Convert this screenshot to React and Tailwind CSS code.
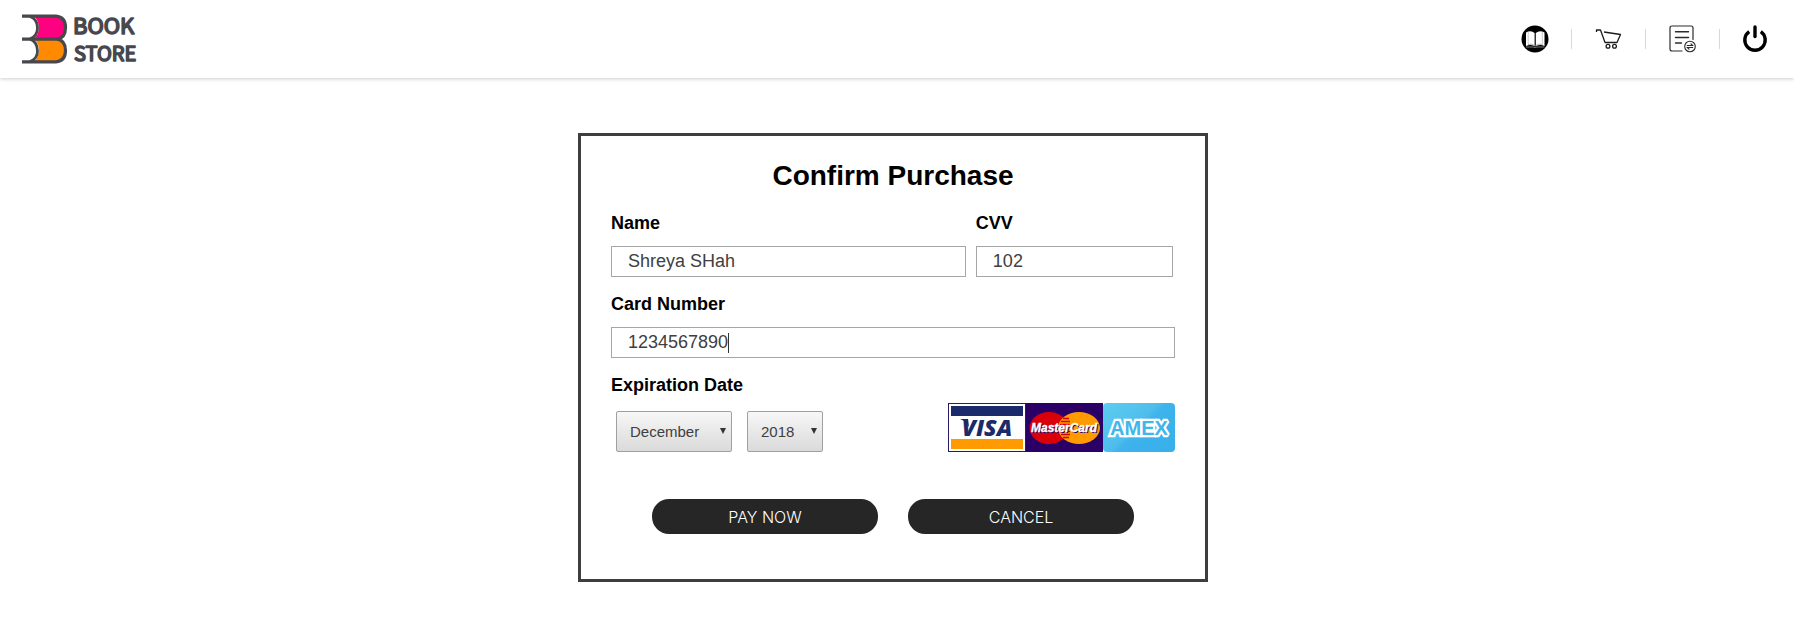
import React from "react";

function Logo() {
  return (
    <svg className="overflow-visible" width="120" height="56" viewBox="20 10 120 56" role="img" aria-label="Book Store">
      <path d="M34 15H56Q66 16 66 26Q66 36 56 38Q66 39 66 49Q66 60 56 61H34Q39 56 39 49Q39 42 34 38Q39 34 39 26Q39 20 34 15Z" fill="#ff8a00" />
      <path d="M34 15H56Q66 16 66 26Q66 36 56 38H34Q39 34 39 26Q39 20 34 15Z" fill="#ff0080" />
      <g fill="none" stroke="#48474d" strokeWidth="3.200">
        <path d="M22 15.200H56Q65.500 16 65.500 26.500Q65.500 37 57 38.200Q65.500 39.500 65.500 49.500Q65.500 60 56 60.800H22" />
        <path d="M22 38.200H58" />
        <path d="M30 15.500Q37.500 18 37.500 27Q37.500 35 30 38Q37.500 41 37.500 50Q37.500 58 30 60.500" strokeWidth="2.800" />
      </g>
      <g fill="#48474d" stroke="#48474d" strokeWidth="1.600" strokeLinejoin="round" fontFamily="'Noto Sans CJK SC', sans-serif" fontWeight="400">
        <text x="73" y="33" fontSize="22">BOOK</text>
        <text x="74" y="60" fontSize="20">STORE</text>
      </g>
    </svg>
  );
}

function BookIcon() {
  return (
    <svg width="28" height="28" viewBox="0 0 28 28">
      <circle cx="14" cy="14" r="13.500" fill="#000" />
      <path d="M5 7.500Q10 5 13.600 8V21Q9 19 5 21ZM23.500 7.500Q18.500 5 14.800 8V21Q19.500 19 23.500 21Z" fill="#fff" />
      <path d="M7 19.500Q11 18 14 21Q17 18 21.500 19.500M5 22H12Q14 23 16 22H23.500" stroke="#999" strokeWidth="0.800" fill="none" />
      <path d="M7.200 7V19M21.300 7V19" stroke="#bbb" strokeWidth="0.800" />
    </svg>
  );
}

function CartIcon() {
  return (
    <svg width="28" height="28" viewBox="0 0 28 28" fill="none" stroke="#1c1c1c" strokeWidth="1.300" strokeLinejoin="round">
      <path d="M1.500 7V5H5.500L10 17.500H22L25.500 9.500L9 7" />
      <circle cx="13" cy="21.300" r="1.900" />
      <circle cx="19.500" cy="21.300" r="1.900" />
    </svg>
  );
}

function OrdersIcon() {
  return (
    <svg width="28" height="28" viewBox="0 0 28 28" fill="none" stroke="#2c2c2c" strokeWidth="1.200" strokeLinecap="round">
      <path d="M13 26H3Q1 26 1 24V3Q1 1 3 1H22Q24 1 24 3V14.500" />
      <path d="M6.500 6.800H19.500M6.500 12.500H19.500M6.500 18H12.500" strokeWidth="1.400" />
      <circle cx="21" cy="21.500" r="5.300" strokeWidth="1.100" />
      <path d="M18.200 20.500H23.500L22 18.900M23.700 22.500H18.400L20 24.200" strokeWidth="1.200" />
    </svg>
  );
}

function PowerIcon() {
  return (
    <svg width="28" height="28" viewBox="0 0 28 28" fill="none" stroke="#000">
      <path d="M8.200 6.600A10.200 10.200 0 1 0 19.800 6.600" strokeWidth="3.400" />
      <path d="M14 2V11.500" strokeWidth="3.400" strokeLinecap="round" />
    </svg>
  );
}

const navItems = [
  { label: "Books", Icon: BookIcon },
  { label: "Cart", Icon: CartIcon },
  { label: "Orders", Icon: OrdersIcon },
  { label: "Log out", Icon: PowerIcon },
];

function Header() {
  return (
    <header className="flex items-center justify-between bg-white pl-5 h-[78px] shadow-[0_1px_4px_rgba(0,0,0,0.2)]">
      <a href="#home" className="block">
        <Logo />
      </a>
      <nav className="flex items-center pr-1">
        {navItems.map(({ label, Icon }, i) => (
          <React.Fragment key={label}>
            {i > 0 && <span className="h-5 w-px bg-[#d8d8d8]" />}
            <a href="#nav" aria-label={label} className="flex w-[73px] justify-center last:w-[70px]">
              <Icon />
            </a>
          </React.Fragment>
        ))}
      </nav>
    </header>
  );
}

function CardLogos() {
  return (
    <svg width="227" height="49" viewBox="0 0 227 49" role="img" aria-label="Visa, MasterCard, Amex">
      <defs>
        <linearGradient id="amex" x1="0" y1="0" x2="1" y2="0.700">
          <stop offset="0" stopColor="#5ccdf0" />
          <stop offset="0.520" stopColor="#4fbdec" />
          <stop offset="0.600" stopColor="#3eb3ec" />
          <stop offset="1" stopColor="#38b0ea" />
        </linearGradient>
      </defs>
      <rect x="0.500" y="0.500" width="77" height="48" fill="#fff" stroke="#2b1a66" />
      <rect x="3" y="3" width="72" height="10" fill="#1b2a6b" />
      <rect x="3" y="36" width="72" height="10" fill="#ff9a00" />
      <text x="39" y="33" textAnchor="middle" fontFamily="'Open Sans', sans-serif" fontWeight="800" fontStyle="italic" fontSize="23" fill="#1b2a6b">VISA</text>
      <path d="M12 16H20L21 24Q18 18 12 16Z" fill="#1b2a6b" />
      <rect x="78" width="77" height="49" fill="#2a0066" />
      <ellipse cx="101" cy="25" rx="19.500" ry="16" fill="#d90009" />
      <ellipse cx="131" cy="25" rx="21" ry="16" fill="#ff9a00" />
      <path d="M115 15.500H121M113 18.500H122M112 21.500H122M112 28.500H122M113 31.500H122M115 34.500H121" stroke="#d90009" strokeWidth="1.500" />
      <g fontFamily="'Liberation Sans', sans-serif" fontWeight="700" fontStyle="italic" fontSize="12" textAnchor="middle">
        <text x="117" y="30" fill="#2a0066">MasterCard</text>
        <text x="116" y="29" fill="#fff" stroke="#fff" strokeWidth="0.300">MasterCard</text>
      </g>
      <rect x="155" width="72" height="49" rx="4" fill="url(#amex)" />
      <text x="191" y="32" textAnchor="middle" fontFamily="'Liberation Sans', sans-serif" fontWeight="700" fontSize="20" fill="#3fb6ec" stroke="#fff" strokeWidth="4.500" strokeLinejoin="miter" strokeMiterlimit="2" paintOrder="stroke">AMEX</text>
    </svg>
  );
}

function Field({ id, label, value, className, focused }) {
  return (
    <div className={className}>
      <label htmlFor={id} className="block text-lg leading-5 font-bold text-black">{label}</label>
      <div className="relative mt-[13px]">
        <input
          id={id}
          type="text"
          defaultValue={value}
          className="block h-[31px] w-full border border-[#a6a6a6] bg-white px-4 text-lg leading-5 text-[#404040] outline-none"
        />
        {focused && (
          <span className="pointer-events-none absolute inset-y-0 left-[17px] flex items-center text-lg leading-5" aria-hidden="true">
            <span className="invisible">{value}</span>
            <span className="h-5 w-px bg-[#333]" />
          </span>
        )}
      </div>
    </div>
  );
}

function Picker({ label, value, className }) {
  return (
    <div className={"relative " + className}>
      <select
        aria-label={label}
        defaultValue={value}
        className="block h-[41px] w-full appearance-none rounded-xs border border-[#a0a0a0] bg-linear-to-b from-[#f7f7f7] to-[#dadada] pt-[2px] pl-[13px] text-[15px] text-[#404040]"
      >
        <option>{value}</option>
      </select>
      <svg className="pointer-events-none absolute top-[17px] right-[6px]" width="6" height="6" viewBox="0 0 6 6">
        <path d="M0 0H6L3 6Z" fill="#333" />
      </svg>
    </div>
  );
}

function PurchaseForm() {
  return (
    <form className="w-[630px] max-w-full border-3 border-[#3e3e3e] bg-white px-[30px] pt-6 pb-[45px]">
      <h1 className="text-center text-[28px] leading-8 font-bold text-black">Confirm Purchase</h1>
      <div className="mt-[21px] flex gap-[10px] pr-[2px]">
        <Field id="name" label="Name" value="Shreya SHah" className="min-w-0 flex-[9]" />
        <Field id="cvv" label="CVV" value="102" className="min-w-0 flex-[5]" />
      </div>
      <Field id="card" label="Card Number" value="1234567890" className="mt-[17px]" focused />
      <fieldset className="mt-[17px]">
        <legend className="text-lg leading-5 font-bold text-black">Expiration Date</legend>
        <div className="mt-2 flex items-end justify-between">
          <div className="flex gap-[15px] pl-[5px]">
            <Picker label="Month" value="December" className="w-[116px]" />
            <Picker label="Year" value="2018" className="w-[76px]" />
          </div>
          <CardLogos />
        </div>
      </fieldset>
      <div className="mt-[47px] flex gap-[30px] px-[41px] font-['Inter',sans-serif] text-base leading-5 font-light text-white">
        <button type="button" className="h-[35px] flex-1 rounded-[17px] bg-[#262626]">PAY NOW</button>
        <button type="button" className="h-[35px] flex-1 rounded-[17px] bg-[#262626]">CANCEL</button>
      </div>
    </form>
  );
}

export default function App() {
  return (
    <div className="min-h-screen bg-white font-['Liberation_Sans',Arial,sans-serif]">
      <Header />
      <main className="flex justify-center pt-[55px] pr-2">
        <PurchaseForm />
      </main>
    </div>
  );
}
